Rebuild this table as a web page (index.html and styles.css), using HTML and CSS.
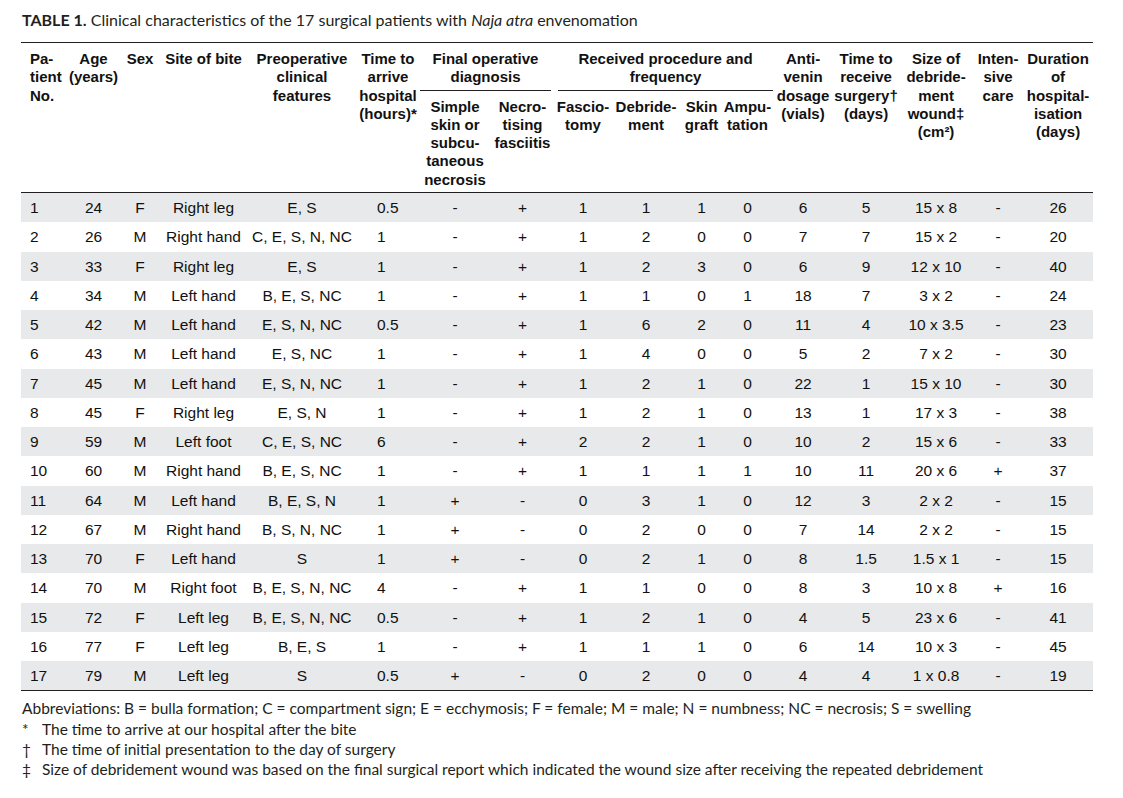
FILE: index.html
```html
<!DOCTYPE html>
<html lang="en">
<head>
<meta charset="utf-8">
<title>Table 1</title>
<link rel="stylesheet" href="styles.css">
</head>
<body>
<div class="page">
  <p class="caption"><span class="label">TABLE 1.</span> Clinical characteristics of the 17 surgical patients with <em>Naja atra</em> envenomation</p>
  <table class="data">
    <colgroup>
      <col style="width:45px"><col style="width:55px"><col style="width:38px"><col style="width:89px"><col style="width:108px"><col style="width:64px">
      <col style="width:70px"><col style="width:65px">
      <col style="width:56px"><col style="width:70px"><col style="width:41px"><col style="width:51px">
      <col style="width:60px"><col style="width:66px"><col style="width:74px"><col style="width:50px"><col style="width:70px">
    </colgroup>
    <thead>
      <tr class="head-main">
        <th rowspan="2" class="left">Pa-<br>tient<br>No.</th>
        <th rowspan="2">Age<br>(years)</th>
        <th rowspan="2">Sex</th>
        <th rowspan="2">Site of bite</th>
        <th rowspan="2">Preoperative<br>clinical<br>features</th>
        <th rowspan="2">Time to<br>arrive<br>hospital<br>(hours)*</th>
        <th colspan="2" class="group"><div class="group-label group-final">Final operative<br>diagnosis</div></th>
        <th colspan="4" class="group"><div class="group-label group-proc">Received procedure and<br>frequency</div></th>
        <th rowspan="2">Anti-<br>venin<br>dosage<br>(vials)</th>
        <th rowspan="2">Time to<br>receive<br>surgery†<br>(days)</th>
        <th rowspan="2">Size of<br>debride-<br>ment<br>wound‡<br>(cm²)</th>
        <th rowspan="2">Inten-<br>sive<br>care</th>
        <th rowspan="2">Duration<br>of<br>hospital-<br>isation<br>(days)</th>
      </tr>
      <tr class="head-sub">
        <th>Simple<br>skin or<br>subcu-<br>taneous<br>necrosis</th>
        <th>Necro-<br>tising<br>fasciitis</th>
        <th>Fascio-<br>tomy</th>
        <th>Debride-<br>ment</th>
        <th>Skin<br>graft</th>
        <th>Ampu-<br>tation</th>
      </tr>
    </thead>
    <tbody>
      <tr><td class="left">1</td><td>24</td><td>F</td><td>Right leg</td><td>E, S</td><td class="arrive">0.5</td><td>-</td><td>+</td><td>1</td><td>1</td><td>1</td><td>0</td><td>6</td><td>5</td><td>15 x 8</td><td>-</td><td>26</td></tr>
      <tr><td class="left">2</td><td>26</td><td>M</td><td>Right hand</td><td>C, E, S, N, NC</td><td class="arrive">1</td><td>-</td><td>+</td><td>1</td><td>2</td><td>0</td><td>0</td><td>7</td><td>7</td><td>15 x 2</td><td>-</td><td>20</td></tr>
      <tr><td class="left">3</td><td>33</td><td>F</td><td>Right leg</td><td>E, S</td><td class="arrive">1</td><td>-</td><td>+</td><td>1</td><td>2</td><td>3</td><td>0</td><td>6</td><td>9</td><td>12 x 10</td><td>-</td><td>40</td></tr>
      <tr><td class="left">4</td><td>34</td><td>M</td><td>Left hand</td><td>B, E, S, NC</td><td class="arrive">1</td><td>-</td><td>+</td><td>1</td><td>1</td><td>0</td><td>1</td><td>18</td><td>7</td><td>3 x 2</td><td>-</td><td>24</td></tr>
      <tr><td class="left">5</td><td>42</td><td>M</td><td>Left hand</td><td>E, S, N, NC</td><td class="arrive">0.5</td><td>-</td><td>+</td><td>1</td><td>6</td><td>2</td><td>0</td><td>11</td><td>4</td><td>10 x 3.5</td><td>-</td><td>23</td></tr>
      <tr><td class="left">6</td><td>43</td><td>M</td><td>Left hand</td><td>E, S, NC</td><td class="arrive">1</td><td>-</td><td>+</td><td>1</td><td>4</td><td>0</td><td>0</td><td>5</td><td>2</td><td>7 x 2</td><td>-</td><td>30</td></tr>
      <tr><td class="left">7</td><td>45</td><td>M</td><td>Left hand</td><td>E, S, N, NC</td><td class="arrive">1</td><td>-</td><td>+</td><td>1</td><td>2</td><td>1</td><td>0</td><td>22</td><td>1</td><td>15 x 10</td><td>-</td><td>30</td></tr>
      <tr><td class="left">8</td><td>45</td><td>F</td><td>Right leg</td><td>E, S, N</td><td class="arrive">1</td><td>-</td><td>+</td><td>1</td><td>2</td><td>1</td><td>0</td><td>13</td><td>1</td><td>17 x 3</td><td>-</td><td>38</td></tr>
      <tr><td class="left">9</td><td>59</td><td>M</td><td>Left foot</td><td>C, E, S, NC</td><td class="arrive">6</td><td>-</td><td>+</td><td>2</td><td>2</td><td>1</td><td>0</td><td>10</td><td>2</td><td>15 x 6</td><td>-</td><td>33</td></tr>
      <tr><td class="left">10</td><td>60</td><td>M</td><td>Right hand</td><td>B, E, S, NC</td><td class="arrive">1</td><td>-</td><td>+</td><td>1</td><td>1</td><td>1</td><td>1</td><td>10</td><td>11</td><td>20 x 6</td><td>+</td><td>37</td></tr>
      <tr><td class="left">11</td><td>64</td><td>M</td><td>Left hand</td><td>B, E, S, N</td><td class="arrive">1</td><td>+</td><td>-</td><td>0</td><td>3</td><td>1</td><td>0</td><td>12</td><td>3</td><td>2 x 2</td><td>-</td><td>15</td></tr>
      <tr><td class="left">12</td><td>67</td><td>M</td><td>Right hand</td><td>B, S, N, NC</td><td class="arrive">1</td><td>+</td><td>-</td><td>0</td><td>2</td><td>0</td><td>0</td><td>7</td><td>14</td><td>2 x 2</td><td>-</td><td>15</td></tr>
      <tr><td class="left">13</td><td>70</td><td>F</td><td>Left hand</td><td>S</td><td class="arrive">1</td><td>+</td><td>-</td><td>0</td><td>2</td><td>1</td><td>0</td><td>8</td><td>1.5</td><td>1.5 x 1</td><td>-</td><td>15</td></tr>
      <tr><td class="left">14</td><td>70</td><td>M</td><td>Right foot</td><td>B, E, S, N, NC</td><td class="arrive">4</td><td>-</td><td>+</td><td>1</td><td>1</td><td>0</td><td>0</td><td>8</td><td>3</td><td>10 x 8</td><td>+</td><td>16</td></tr>
      <tr><td class="left">15</td><td>72</td><td>F</td><td>Left leg</td><td>B, E, S, N, NC</td><td class="arrive">0.5</td><td>-</td><td>+</td><td>1</td><td>2</td><td>1</td><td>0</td><td>4</td><td>5</td><td>23 x 6</td><td>-</td><td>41</td></tr>
      <tr><td class="left">16</td><td>77</td><td>F</td><td>Left leg</td><td>B, E, S</td><td class="arrive">1</td><td>-</td><td>+</td><td>1</td><td>1</td><td>1</td><td>0</td><td>6</td><td>14</td><td>10 x 3</td><td>-</td><td>45</td></tr>
      <tr><td class="left">17</td><td>79</td><td>M</td><td>Left leg</td><td>S</td><td class="arrive">0.5</td><td>+</td><td>-</td><td>0</td><td>2</td><td>0</td><td>0</td><td>4</td><td>4</td><td>1 x 0.8</td><td>-</td><td>19</td></tr>
    </tbody>
  </table>
  <div class="notes">
    <p class="abbr">Abbreviations: B = bulla formation; C = compartment sign; E = ecchymosis; F = female; M = male; N = numbness; NC = necrosis; S = swelling</p>
    <p class="note"><span class="mark">*</span>The time to arrive at our hospital after the bite</p>
    <p class="note"><span class="mark">†</span>The time of initial presentation to the day of surgery</p>
    <p class="note"><span class="mark">‡</span>Size of debridement wound was based on the final surgical report which indicated the wound size after receiving the repeated debridement</p>
  </div>
</div>
</body>
</html>
```

FILE: styles.css
```css
html, body {
  margin: 0;
  padding: 0;
  background: #ffffff;
  color: #231f20;
}

.page {
  padding: 11px 0 0 21px;
}

.caption {
  margin: 0;
  font-family: "Lato", "Open Sans", sans-serif;
  font-size: 16px;
  line-height: 18px;
  padding-left: 1px;
}

.caption .label {
  font-weight: 700;
}

.data {
  margin-top: 13px;
  border-collapse: collapse;
  table-layout: fixed;
  width: 1072px;
  font-family: "Liberation Sans", Arial, sans-serif;
  color: #111111;
}

.data thead {
  border-top: 1px solid #231f20;
  border-bottom: 1px solid #231f20;
}

.data th {
  font-size: 15px;
  font-weight: 700;
  line-height: 18.3px;
  text-align: center;
  vertical-align: top;
  white-space: nowrap;
  padding: 0;
}

.head-main th {
  padding-top: 7px;
}

.head-main th.group {
  padding-bottom: 0;
}

.group-label {
  border-bottom: 1px solid #231f20;
  padding-bottom: 3px;
}

.group-final {
  margin-right: 4px;
}

.group-proc {
  margin-left: 3px;
}

.head-sub th {
  padding-top: 7px;
  padding-bottom: 3px;
}

.data th.left {
  text-align: left;
  padding-left: 9px;
}

.data tbody {
  border-bottom: 1px solid #231f20;
}

.data td {
  font-size: 15.5px;
  line-height: 18px;
  height: 28.25px;
  padding: 1px 0 0 0;
  text-align: center;
  vertical-align: middle;
  white-space: nowrap;
}

.data tbody tr:nth-child(odd) td {
  background: #e8e9ea;
}

.data td.left {
  text-align: left;
  padding-left: 9px;
}

.data td.arrive {
  text-align: left;
  padding-left: 21px;
}

.notes {
  margin-top: 7px;
  font-family: "Lato", "Open Sans", sans-serif;
  font-size: 15.5px;
  line-height: 20.3px;
}

.notes p {
  margin: 0;
  padding-left: 1px;
}

.mark {
  display: inline-block;
  width: 20px;
}
```
